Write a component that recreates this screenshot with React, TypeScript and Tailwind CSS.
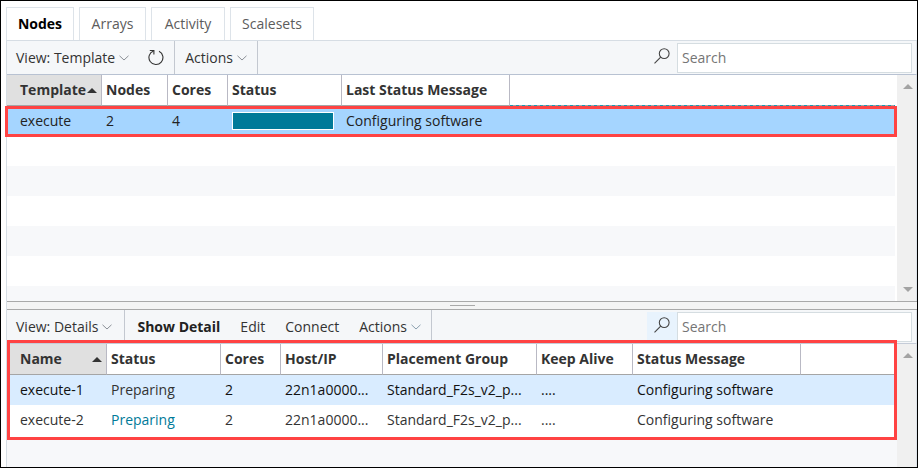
import type { ReactNode } from 'react';

function Chevron({ className = 'text-[#8a8f96]' }: { className?: string }) {
  return (
    <svg width="10" height="6" viewBox="0 0 10 6" fill="none" stroke="currentColor" className={className} aria-hidden="true">
      <path d="M0.5 0.8 L5 5 L9.5 0.8" />
    </svg>
  );
}

function Reload() {
  return (
    <svg width="16" height="17" viewBox="0 0 16 17" fill="none" stroke="#333" strokeWidth="1.1" aria-hidden="true">
      <path d="M11 2.2 A7 7 0 1 1 5.6 1.9" />
      <path d="M1.8 1.5 H5.9 V5.4" />
    </svg>
  );
}

function Magnifier() {
  return (
    <svg width="16" height="16" viewBox="0 0 16 16" fill="none" stroke="#444" strokeWidth="1.1" aria-hidden="true">
      <circle cx="10.2" cy="5.6" r="4.9" />
      <path d="M6.7 9.2 L0.5 15.4" />
    </svg>
  );
}

function SortArrow() {
  return (
    <svg width="10" height="5" viewBox="0 0 10 5" fill="#333" aria-hidden="true">
      <path d="M5 0 L10 5 H0 Z" />
    </svg>
  );
}

function ScrollBar({ down = false }: { down?: boolean }) {
  return (
    <div className="flex w-[19px] shrink-0 flex-col items-center justify-between bg-[#f0f0f0] pt-[9px] pb-[9px] pl-[2px]" aria-hidden="true">
      <svg width="10" height="5" viewBox="0 0 10 5" fill="#a3a3a3">
        <path d="M5 0 L10 5 H0 Z" />
      </svg>
      {down && (
        <svg width="10" height="5" viewBox="0 0 10 5" fill="#a3a3a3">
          <path d="M0 0 H10 L5 5 Z" />
        </svg>
      )}
    </div>
  );
}

function SearchBox({ id, label, active = false }: { id: string; label: string; active?: boolean }) {
  return (
    <div className="ml-auto flex h-[30px] pr-1">
      <label htmlFor={id} className={`flex w-[30px] items-center justify-center pb-1 ${active ? 'bg-[#e8f3fd]' : ''}`}>
        <Magnifier />
      </label>
      <input
        id={id}
        type="search"
        aria-label={label}
        placeholder="Search"
        className="w-[235px] border border-[#d5dde1] bg-white px-1 text-sm placeholder:text-[#757575] outline-none"
      />
    </div>
  );
}

const tabs = [
  { name: 'Nodes', width: 'w-[68px]' },
  { name: 'Arrays', width: 'w-[67px]' },
  { name: 'Activity', width: 'w-[74px]' },
  { name: 'Scalesets', width: 'w-[84px]' },
];

type Column = { name: string; width: string };

const templateColumns: Column[] = [
  { name: 'Template', width: 'w-[95px]' },
  { name: 'Nodes', width: 'w-[66px]' },
  { name: 'Cores', width: 'w-[60px]' },
  { name: 'Status', width: 'w-[114px]' },
  { name: 'Last Status Message', width: 'w-[168px]' },
];

const nodeColumns: Column[] = [
  { name: 'Name', width: 'w-[100px]' },
  { name: 'Status', width: 'w-[114px]' },
  { name: 'Cores', width: 'w-[60px]' },
  { name: 'Host/IP', width: 'w-[102px]' },
  { name: 'Placement Group', width: 'w-[154px]' },
  { name: 'Keep Alive', width: 'w-[96px]' },
  { name: 'Status Message', width: 'w-[168px]' },
];

const nodes = [
  { name: 'execute-1', selected: true },
  { name: 'execute-2', selected: false },
];

const stripes = ['bg-white', 'bg-[#f7f8fa]', 'bg-white', 'bg-[#f7f8fa]', 'bg-white', 'bg-[#f7f8fa]'];

const dashedLine =
  'bg-[image:repeating-linear-gradient(90deg,#1b9ab3_0_3px,#a5a5a5_3px_6px)] bg-[length:100%_1px] bg-bottom bg-no-repeat';

function Grid({ label, columns, filler, children }: { label: string; columns: Column[]; filler: string; children: ReactNode }) {
  return (
    <table aria-label={label} className="w-full table-fixed border-separate border-spacing-0 text-left">
      <thead>
        <tr className="h-[31px]">
          {columns.map((column, i) => (
            <th
              key={column.name}
              aria-sort={i === 0 ? 'ascending' : undefined}
              className={`border-r border-b border-r-[#b9b9c4] border-b-[#a5a5a5] p-0 font-bold whitespace-nowrap ${column.width} ${i === 0 ? 'bg-[#e0e0e0] pl-[13px]' : 'pl-1'}`}
            >
              {i === 0 ? (
                <button type="button" className="flex w-full items-center justify-between pr-1 font-bold">
                  {column.name}
                  <SortArrow />
                </button>
              ) : (
                column.name
              )}
            </th>
          ))}
          <td className={`p-0 ${filler}`} />
        </tr>
      </thead>
      <tbody>{children}</tbody>
    </table>
  );
}

function Cell({ first = false, className = '', children }: { first?: boolean; className?: string; children?: ReactNode }) {
  return (
    <td className={`truncate p-0 ${first ? 'pl-[13px]' : 'pl-1'} ${className}`}>{children}</td>
  );
}

export default function App() {
  return (
    <div
      className="flex h-screen flex-col border border-black bg-white pt-[6px] pl-[5px] text-sm text-[#333]"
      style={{ fontFamily: '"Segoe UI", "Open Sans", "Noto Sans", sans-serif' }}
    >
      <div role="tablist" className="flex gap-[5px]">
        {tabs.map((tab, i) => (
          <button
            key={tab.name}
            type="button"
            role="tab"
            aria-selected={i === 0}
            className={`h-[33px] border border-b-0 border-[#dde3e9] text-center ${tab.width} ${i === 0 ? 'font-bold text-black' : 'text-[#5c5c5c]'}`}
          >
            {tab.name}
          </button>
        ))}
      </div>

      <main className="flex min-h-0 flex-1 flex-col border-t border-l border-[#d6dde4]">
        <section className="flex flex-col">
          <div className="flex h-[34px] items-center border-r border-b border-r-[#dde3e9] border-b-[#b8c2d2] bg-[#f5f7f9]">
            <button type="button" className="flex items-center gap-1 pl-[9px]">
              View: Template
              <Chevron />
            </button>
            <button type="button" aria-label="Refresh" className="mr-[10px] ml-[19px]">
              <Reload />
            </button>
            <button type="button" className="flex h-full items-center gap-1 border-x border-[#c3c8d0] px-[10px]">
              Actions
              <Chevron />
            </button>
            <SearchBox id="template-search" label="Search templates" />
          </div>
          <div className="flex h-[226px] border-r border-[#dde3e9]">
            <div className="min-w-0 flex-1 overflow-hidden pr-[2px]">
              <Grid label="Node templates" columns={templateColumns} filler={dashedLine}>
                <tr className="h-[30px] bg-[#a5d5ff] text-[#222]">
                  <Cell first>execute</Cell>
                  <Cell>2</Cell>
                  <Cell>4</Cell>
                  <Cell>
                    <div role="progressbar" aria-label="Status" className="h-[18px] w-[102px] border border-white bg-[#007a99]" />
                  </Cell>
                  <Cell>Configuring software</Cell>
                  <Cell />
                </tr>
                {stripes.map((stripe, i) => (
                  <tr key={i} className={`h-[30px] ${stripe}`}>
                    <td colSpan={6} className="p-0" />
                  </tr>
                ))}
              </Grid>
            </div>
            <ScrollBar down />
          </div>
        </section>

        <div role="separator" className="flex h-[9px] shrink-0 items-center justify-center border-y border-[#a9a9a9] bg-[#f4f4f4]">
          <div className="h-px w-[25px] bg-[#a9a9a9]" />
        </div>

        <section className="flex min-h-0 flex-1 flex-col">
          <div className="flex h-[34px] shrink-0 items-center border-r border-b border-r-[#dde3e9] border-b-[#c5ccd8] bg-[#f5f7f9]">
            <button type="button" className="flex h-full items-center gap-1 border-r border-[#c3c8d0] pr-3 pl-[9px]">
              View: Details
              <Chevron />
            </button>
            <div className="flex h-full items-center gap-5 border-r border-[#c3c8d0] pr-[10px] pl-3">
              <button type="button" className="font-bold text-[#222]">Show Detail</button>
              <button type="button">Edit</button>
              <button type="button">Connect</button>
              <button type="button" className="flex items-center gap-1">
                Actions
                <Chevron className="text-[#8a9fae]" />
              </button>
            </div>
            <SearchBox id="node-search" label="Search nodes" active />
          </div>
          <div className="flex min-h-0 flex-1 border-r border-[#dde3e9]">
            <div className="min-w-0 flex-1 bg-[#f7f8fa] pr-[2px]">
              <div className="bg-white pb-[2px]">
                <Grid label="Nodes" columns={nodeColumns} filler="border-b border-[#a5a5a5]">
                  {nodes.map((node) => (
                    <tr key={node.name} className={`h-[30px] ${node.selected ? 'bg-[#d9ecff] text-[#111]' : 'bg-white'}`}>
                      <Cell first>{node.name}</Cell>
                      <Cell className={node.selected ? 'text-[#333]' : 'text-[#007a99]'}>Preparing</Cell>
                      <Cell>2</Cell>
                      <Cell>22n1a0000...</Cell>
                      <Cell>Standard_F2s_v2_p...</Cell>
                      <Cell>....</Cell>
                      <Cell>Configuring software</Cell>
                      <Cell />
                    </tr>
                  ))}
                </Grid>
              </div>
            </div>
            <ScrollBar />
          </div>
        </section>
      </main>

      {/* Callout frames over the selected template and its nodes */}
      <div className="pointer-events-none absolute top-[106px] right-[21px] left-[5px] h-[31px] border-3 border-[#ff4343]" />
      <div className="pointer-events-none absolute top-[340px] right-[21px] left-[7px] h-[100px] border-3 border-[#ff4343]" />
    </div>
  );
}
